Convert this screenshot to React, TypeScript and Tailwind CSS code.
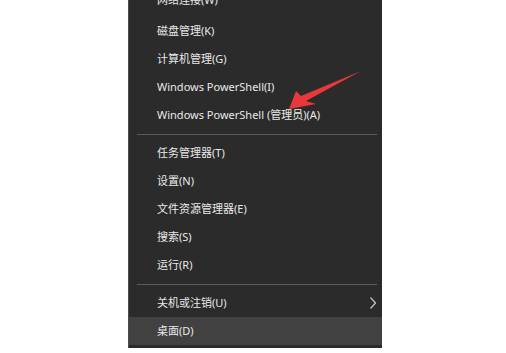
type Item = { label: string; sep?: boolean; sub?: boolean; active?: boolean };

const items: Item[] = [
    { label: "网络连接(W)" },
    { label: "磁盘管理(K)" },
    { label: "计算机管理(G)" },
    { label: "Windows PowerShell(I)" },
    { label: "Windows PowerShell (管理员)(A)" },
    { label: "", sep: true },
    { label: "任务管理器(T)" },
    { label: "设置(N)" },
    { label: "文件资源管理器(E)" },
    { label: "搜索(S)" },
    { label: "运行(R)" },
    { label: "", sep: true },
    { label: "关机或注销(U)", sub: true },
    { label: "桌面(D)", active: true },
];

export default function App() {
    return (
        <div className="relative w-[506px] h-[353px] overflow-hidden bg-white font-['Segoe_UI','Noto_Sans','Noto_Sans_CJK_SC',sans-serif]">
            <div className="ml-[128px] -mt-[11px] w-[254px] h-[359px] bg-[#2b2b2b] border-l border-[#4c4c4c] flex flex-col">
                {items.map((item, i) =>
                    item.sep ? (
                        <div key={i} className="h-[10px] flex items-center pl-[8px] pr-[5px]">
                            <div className="h-px w-full bg-[#5c5c5c]" />
                        </div>
                    ) : (
                        <div
                            key={i}
                            className={
                                "h-[28px] flex items-center justify-between pl-[28px] pr-[6px] text-[11px] text-[#e9e9e9] " +
                                (item.active ? "bg-[#414141] " : "") +
                                (i === 0 ? "pb-[5px]" : "")
                            }
                        >
                            <span>{item.label}</span>
                            {item.sub && (
                                <svg width="6" height="12" viewBox="0 0 6 12">
                                    <polyline points="0.5,0.5 5.5,6 0.5,11.5" fill="none" stroke="#bdbdbd" strokeWidth="1.3" />
                                </svg>
                            )}
                        </div>
                    )
                )}
            </div>

            {/* red annotation arrow */}
            <svg className="absolute left-0 top-0" width="506" height="353" viewBox="0 0 506 353">
                <polygon
                    points="289,109 296,91 301,96 361,71 306,101 316,104"
                    fill="#e8383a"
                />
            </svg>
        </div>
    );
}
